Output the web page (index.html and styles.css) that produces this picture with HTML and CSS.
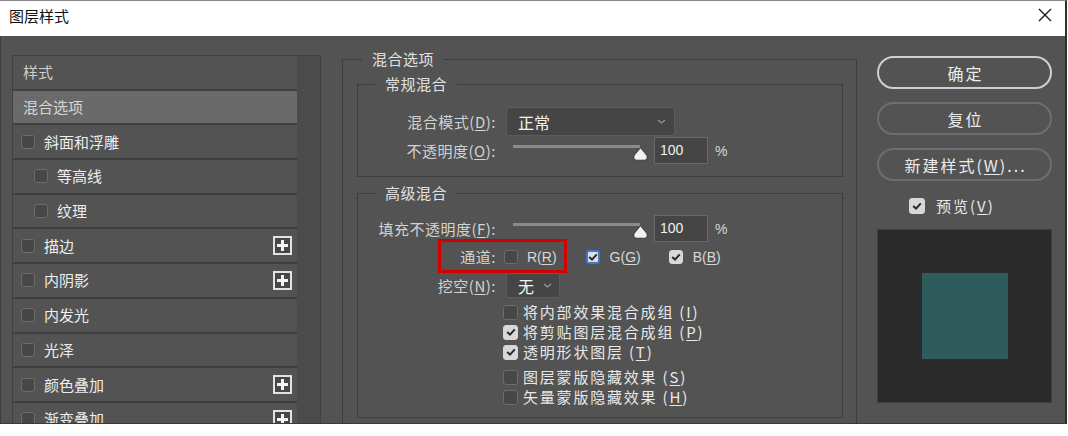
FILE: index.html
```html
<!DOCTYPE html>
<html lang="zh-CN">
<head>
<meta charset="utf-8">
<title>图层样式</title>
<link rel="stylesheet" href="styles.css">
</head>
<body>
<div class="window">
  <div class="titlebar">
    <span class="title">图层样式</span>
    <svg class="close" width="14" height="14" viewBox="0 0 14 14"><path d="M1 1 L13 13 M13 1 L1 13" stroke="#1a1a1a" stroke-width="1.4" fill="none"/></svg>
  </div>
  <div class="main">
    <div class="styles-panel">
      <ul class="style-list">
        <li class="row head">样式</li>
        <li class="row head selected">混合选项</li>
        <li class="row"><span class="cb"></span><span class="name">斜面和浮雕</span></li>
        <li class="row sub"><span class="cb"></span><span class="name">等高线</span></li>
        <li class="row sub"><span class="cb"></span><span class="name">纹理</span></li>
        <li class="row"><span class="cb"></span><span class="name">描边</span><svg class="plus" width="19" height="19" viewBox="0 0 19 19"><rect x="1" y="1" width="17" height="17" fill="#474747" stroke="#e2e2e2" stroke-width="2"/><path d="M4 9.5 H15 M9.5 4 V15" stroke="#f4f4f4" stroke-width="3"/></svg></li>
        <li class="row"><span class="cb"></span><span class="name">内阴影</span><svg class="plus" width="19" height="19" viewBox="0 0 19 19"><rect x="1" y="1" width="17" height="17" fill="#474747" stroke="#e2e2e2" stroke-width="2"/><path d="M4 9.5 H15 M9.5 4 V15" stroke="#f4f4f4" stroke-width="3"/></svg></li>
        <li class="row"><span class="cb"></span><span class="name">内发光</span></li>
        <li class="row"><span class="cb"></span><span class="name">光泽</span></li>
        <li class="row"><span class="cb"></span><span class="name">颜色叠加</span><svg class="plus" width="19" height="19" viewBox="0 0 19 19"><rect x="1" y="1" width="17" height="17" fill="#474747" stroke="#e2e2e2" stroke-width="2"/><path d="M4 9.5 H15 M9.5 4 V15" stroke="#f4f4f4" stroke-width="3"/></svg></li>
        <li class="row"><span class="cb"></span><span class="name">渐变叠加</span><svg class="plus" width="19" height="19" viewBox="0 0 19 19"><rect x="1" y="1" width="17" height="17" fill="#474747" stroke="#e2e2e2" stroke-width="2"/><path d="M4 9.5 H15 M9.5 4 V15" stroke="#f4f4f4" stroke-width="3"/></svg></li>
      </ul>
      <div class="scroll"></div>
    </div>

    <fieldset class="group outer">
      <legend>混合选项</legend>
      <fieldset class="group inner normal">
        <legend>常规混合</legend>
        <div class="form-row r-mode">
          <label>混合模式(<u>D</u>):</label>
          <div class="select mode"><span>正常</span><svg width="9" height="5" viewBox="0 0 9 5"><polyline points="1,1 4.5,4 8,1" fill="none" stroke="#9a9a9a" stroke-width="1.2"/></svg></div>
        </div>
        <div class="form-row r-slider">
          <label>不透明度(<u>O</u>):</label>
          <div class="slider-group">
            <div class="slider"><div class="track"></div><svg class="thumb" width="15" height="14" viewBox="0 0 15 14"><path d="M7.5 0.8 L13.6 8.2 Q14.6 9.6 13.9 11.6 Q13.2 13.2 11.4 13.2 L3.6 13.2 Q1.8 13.2 1.1 11.6 Q0.4 9.6 1.4 8.2 Z" fill="#f2f2f2" stroke="#2a2a2a" stroke-width="0.8"/></svg></div>
            <div class="num">100</div>
            <span class="pct">%</span>
          </div>
        </div>
      </fieldset>

      <fieldset class="group inner advanced">
        <legend>高级混合</legend>
        <div class="form-row r-slider">
          <label>填充不透明度(<u>F</u>):</label>
          <div class="slider-group">
            <div class="slider"><div class="track"></div><svg class="thumb" width="15" height="14" viewBox="0 0 15 14"><path d="M7.5 0.8 L13.6 8.2 Q14.6 9.6 13.9 11.6 Q13.2 13.2 11.4 13.2 L3.6 13.2 Q1.8 13.2 1.1 11.6 Q0.4 9.6 1.4 8.2 Z" fill="#f2f2f2" stroke="#2a2a2a" stroke-width="0.8"/></svg></div>
            <div class="num">100</div>
            <span class="pct">%</span>
          </div>
        </div>
        <div class="form-row r-channel">
          <label>通道:</label>
          <div class="channels">
            <span class="ch"><span class="cb"></span><span>R(<u>R</u>)</span></span>
            <span class="ch"><span class="cb on blue"><svg width="10" height="8" viewBox="0 0 10 8"><path d="M1.2 4 L4 6.6 L8.8 1.4" fill="none" stroke="#2a2a2a" stroke-width="2"/></svg></span><span>G(<u>G</u>)</span></span>
            <span class="ch"><span class="cb on"><svg width="10" height="8" viewBox="0 0 10 8"><path d="M1.2 4 L4 6.6 L8.8 1.4" fill="none" stroke="#2a2a2a" stroke-width="2"/></svg></span><span>B(<u>B</u>)</span></span>
          </div>
          <div class="highlight"></div>
        </div>
        <div class="form-row r-knock">
          <label>挖空(<u>N</u>):</label>
          <div class="select knock"><span>无</span><svg width="9" height="5" viewBox="0 0 9 5"><polyline points="1,1 4.5,4 8,1" fill="none" stroke="#9a9a9a" stroke-width="1.2"/></svg></div>
        </div>
        <ul class="checks">
          <li><span class="cb"></span><span>将内部效果混合成组 (<u>I</u>)</span></li>
          <li><span class="cb on"><svg width="10" height="8" viewBox="0 0 10 8"><path d="M1.2 4 L4 6.6 L8.8 1.4" fill="none" stroke="#2a2a2a" stroke-width="2"/></svg></span><span>将剪贴图层混合成组 (<u>P</u>)</span></li>
          <li><span class="cb on"><svg width="10" height="8" viewBox="0 0 10 8"><path d="M1.2 4 L4 6.6 L8.8 1.4" fill="none" stroke="#2a2a2a" stroke-width="2"/></svg></span><span>透明形状图层 (<u>T</u>)</span></li>
          <li class="sep"><span class="cb"></span><span>图层蒙版隐藏效果 (<u>S</u>)</span></li>
          <li><span class="cb"></span><span>矢量蒙版隐藏效果 (<u>H</u>)</span></li>
        </ul>
      </fieldset>
    </fieldset>

    <div class="actions">
      <button class="btn primary">确定</button>
      <button class="btn">复位</button>
      <button class="btn wide">新建样式(<u>W</u>)...</button>
      <div class="preview-check"><span class="cb on big"><svg width="10" height="8" viewBox="0 0 10 8"><path d="M1.2 4 L4 6.6 L8.8 1.4" fill="none" stroke="#2a2a2a" stroke-width="2"/></svg></span><span>预览(<u>V</u>)</span></div>
      <div class="preview"><div class="swatch"></div></div>
    </div>
  </div>
</div>
</body>
</html>
```

FILE: styles.css
```css
* { box-sizing: border-box; }
html, body { margin: 0; padding: 0; background: #ffffff; }
body {
  min-height: 436px;
  font-family: "Noto Sans CJK SC", "Noto Sans", "Liberation Sans", sans-serif;
  font-size: 15px;
  color: #e6e6e6;
}
ul { list-style: none; margin: 0; padding: 0; }
u { text-decoration-thickness: 1px; text-underline-offset: 2px; }

.window {
  width: 1067px;
  border-top: 1px solid #8a8a8a;
  border-right: 2px solid #2f2f2f;
}

.titlebar {
  height: 35px;
  background: #ffffff;
  display: flex;
  justify-content: space-between;
  align-items: flex-start;
  padding: 5px 13px 0 9px;
}
.title { font-size: 15px; line-height: 20px; color: #111111; }
.close { margin-top: 2px; }

.main {
  height: 388px;
  background: #535353;
  border-left: 1px solid #3e3e3e;
  border-bottom: 1px solid #3a3a3a;
  padding-left: 11px;
  display: flex;
  align-items: flex-start;
  overflow: hidden;
}

/* ---------- left style list ---------- */
.styles-panel {
  width: 309px;
  height: 400px;
  margin-top: 19px;
  border: 1px solid #414141;
  display: flex;
}
.style-list { flex: 1; }
.scroll { width: 23px; background: #4b4b4b; }

.row {
  height: 34.7px;
  border-bottom: 2px solid #3f3f3f;
  display: flex;
  align-items: center;
  padding-left: 8px;
  padding-right: 5px;
  font-size: 15px;
  line-height: 20px;
  color: #eeeeee;
}
.row.head { padding-left: 10px; color: #cdcdcd; }
.row.selected { background: #6a6a6a; color: #d6d6d6; }
.row.sub { padding-left: 21px; }
.row .name { margin-left: 9px; }
.row .plus { margin-left: auto; }

/* ---------- checkboxes ---------- */
.cb {
  flex: none;
  width: 14px;
  height: 14px;
  border: 1px solid #6c6c6c;
  border-radius: 3px;
  background: #474747;
  display: inline-flex;
  align-items: center;
  justify-content: center;
}
.cb.on { background: #d8d8d8; border-color: #d8d8d8; }
.cb.blue { border: 2px solid #3b77d6; background: #dedede; }
.cb.big { width: 16px; height: 16px; }

/* ---------- fieldsets ---------- */
.group {
  margin: 0;
  min-width: 0;
  border: 1px solid #3d3d3d;
}
.group legend {
  padding: 0 10px;
  font-size: 15px;
  line-height: 20px;
  letter-spacing: 0.5px;
  color: #e2e2e2;
}
.outer {
  width: 515px;
  margin-left: 21px;
  margin-top: 13px;
  padding: 5px 13px 10px 14px;
}
.outer > legend { margin-left: 5px; }
.inner > legend { margin-left: 17px; }
.normal { padding: 13px 0 12px 0; }
.advanced { margin-top: 6px; padding: 12px 0 10px 0; }

.form-row {
  display: grid;
  grid-template-columns: 138px auto;
  column-gap: 10px;
  align-items: center;
  justify-content: start;
}
.form-row label {
  text-align: right;
  font-size: 15px;
  line-height: 20px;
  letter-spacing: 0.5px;
  color: #d2d2d2;
  white-space: nowrap;
}
.r-mode { height: 29px; }
.r-slider { height: 27px; margin-top: 1px; }
.advanced .r-slider { margin-top: 0; }
.r-channel { height: 24px; margin-top: 3px; position: relative; }
.r-knock { height: 25px; margin-top: 4px; }

.select {
  height: 100%;
  background: #454545;
  border: 1px solid #5d5d5d;
  border-radius: 3px;
  display: flex;
  align-items: center;
  justify-content: space-between;
  padding: 0 8px 0 11px;
  font-size: 16px;
  line-height: 20px;
  color: #f2f2f2;
}
.select.mode { width: 169px; }
.select.knock { width: 54px; padding-right: 7px; }

.slider-group { display: flex; align-items: center; height: 27px; }
.slider { position: relative; width: 141px; height: 27px; }
.track {
  position: absolute;
  left: 7px;
  top: 8px;
  width: 127px;
  height: 3px;
  background: #8a8a8a;
}
.thumb { position: absolute; left: 127px; top: 10px; }
.num {
  margin-left: 7px;
  width: 54px;
  height: 27px;
  background: #454545;
  border: 1px solid #686868;
  padding-left: 5px;
  font-size: 14px;
  line-height: 25px;
  color: #f0f0f0;
  font-family: "Liberation Sans", "Noto Sans", sans-serif;
}
.pct {
  margin-left: 7px;
  font-size: 14px;
  color: #d6d6d6;
  font-family: "Liberation Sans", "Noto Sans", sans-serif;
}

.channels { display: flex; align-items: center; margin-left: -2px; }
.ch {
  display: inline-flex;
  align-items: center;
  gap: 10px;
  margin-right: 28px;
  font-size: 14px;
  color: #d8d8d8;
  font-family: "Liberation Sans", "Noto Sans", sans-serif;
}
.ch:first-child { gap: 9px; margin-right: 29px; }
.highlight {
  position: absolute;
  left: 80px;
  top: -6px;
  width: 129px;
  height: 34px;
  border: 3px solid #d40000;
}

.checks { margin-left: 145px; margin-top: 4px; }
.checks li {
  height: 20px;
  display: flex;
  align-items: center;
  gap: 5px;
  font-size: 15px;
  line-height: 20px;
  letter-spacing: 1.8px;
  color: #e8e8e8;
}
.checks .cb { width: 15px; height: 15px; }
.checks li.sep { margin-top: 5px; }

/* ---------- right actions ---------- */
.actions {
  width: 175px;
  margin-left: 20px;
  margin-top: 20px;
  display: flex;
  flex-direction: column;
}
.btn {
  height: 33px;
  border: 2px solid #6e6e6e;
  border-radius: 17px;
  background: transparent;
  color: #ececec;
  font-family: inherit;
  font-size: 16px;
  line-height: 20px;
  letter-spacing: 2px;
  padding: 0 0 0 2px;
  margin: 0 0 13px 0;
}
.btn.primary { border-color: #cfcfcf; }
.btn.wide { letter-spacing: 2px; margin-bottom: 0; }

.preview-check {
  margin-top: 15px;
  height: 20px;
  padding-left: 32px;
  display: flex;
  align-items: center;
  gap: 11px;
  font-size: 15px;
  line-height: 20px;
  letter-spacing: 2px;
  color: #e8e8e8;
}
.preview {
  margin-top: 13px;
  height: 174px;
  background: #2b2b2b;
  border: 1px solid #3e3e3e;
  display: flex;
  align-items: center;
  justify-content: center;
}
.swatch { width: 86px; height: 86px; background: #2e5b5b; }
```
